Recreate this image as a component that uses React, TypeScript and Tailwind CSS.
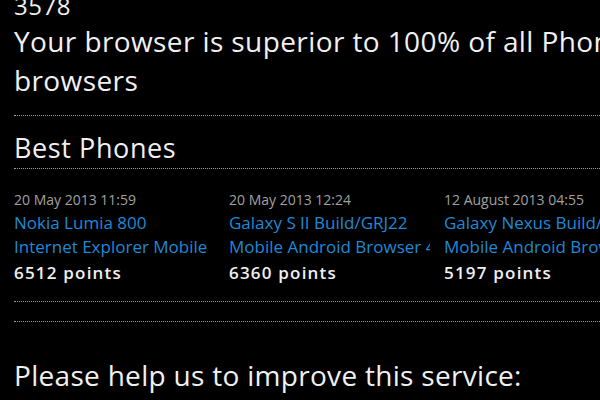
const phones = [
  { date: '20 May 2013 11:59', name: 'Nokia Lumia 800', browser: 'Internet Explorer Mobile', points: 6512 },
  { date: '20 May 2013 12:24', name: 'Galaxy S II Build/GRJ22', browser: 'Mobile Android Browser 4.0', points: 6360 },
  { date: '12 August 2013 04:55', name: 'Galaxy Nexus Build/JRO03C', browser: 'Mobile Android Browser 4.1', points: 5197 },
];

function Dotted() {
  return <div className="h-0 border-t border-dotted border-[#9a9a9a]" />;
}

export default function App() {
  return (
    <div
      className="h-[400px] w-[600px] overflow-hidden bg-black pl-[14px] text-[#f0f0f0]"
      style={{ fontFamily: '"Open Sans", "Noto Sans", sans-serif' }}
    >
      <div className="mt-[-10px] h-[32px] text-[24px] leading-[32px] tracking-[0.5px]">3578</div>
      <div className="whitespace-nowrap text-[28px] leading-[39px] tracking-[0.4px]">
        Your browser is superior to 100% of all Phone
        <br />
        browsers
      </div>
      <div className="mt-[15px]">
        <Dotted />
      </div>
      <div className="mt-[14px] h-[36px] text-[27px] leading-[36px] tracking-[0.6px]">Best Phones</div>
      <div className="mt-[2px]">
        <Dotted />
      </div>
      <div className="mt-[19px] flex gap-[14px]">
        {phones.map((p) => (
          <div key={p.date} className="w-[201px] shrink-0 overflow-hidden whitespace-nowrap">
            <div className="text-[14px] leading-[23px] text-[#a0a0a0]">{p.date}</div>
            <div className="text-[17px] leading-[24px] text-[#1e8ad6]">{p.name}</div>
            <div className="text-[17px] leading-[24px] text-[#1e8ad6]">{p.browser}</div>
            <div className="mt-[2px] text-[17px] font-semibold leading-[24px] tracking-[1.2px]">{p.points} points</div>
          </div>
        ))}
      </div>
      <div className="mt-[16px]">
        <Dotted />
      </div>
      <div className="mt-[19px]">
        <Dotted />
      </div>
      <div className="mt-[35px] whitespace-nowrap text-[28px] leading-[36px] tracking-[0.3px]">
        Please help us to improve this service:
      </div>
    </div>
  );
}
